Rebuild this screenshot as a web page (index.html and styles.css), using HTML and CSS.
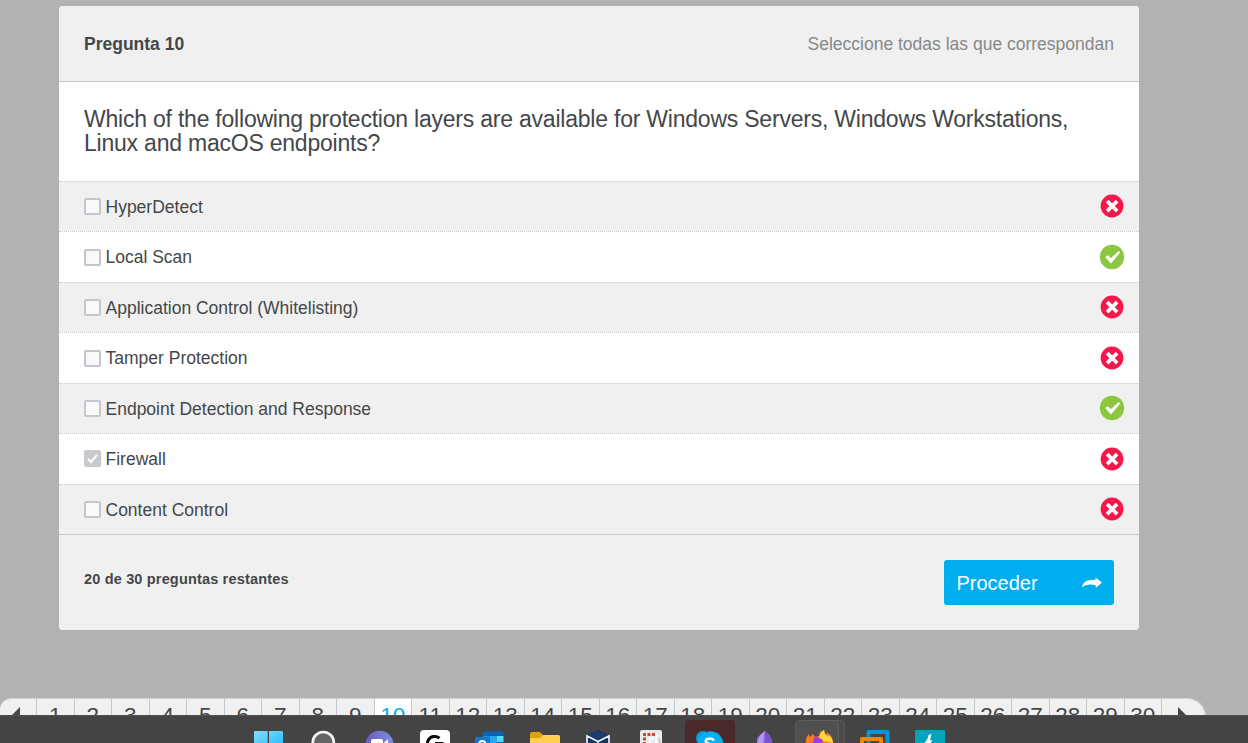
FILE: index.html
```html
<!DOCTYPE html>
<html lang="es">
<head>
<meta charset="utf-8">
<title>Pregunta 10</title>
<link rel="stylesheet" href="styles.css">
</head>
<body>
<svg class="defs" width="0" height="0">
  <defs>
    <symbol id="wrong" viewBox="0 0 26 26"><circle cx="13" cy="13" r="11.4" fill="#f5174a"/><path d="M9.4 9.4l7.400 7.400M16.800 9.400l-7.400 7.400" stroke="#fff" stroke-width="3.700" stroke-linecap="square" stroke-linejoin="round"/></symbol>
    <symbol id="right" viewBox="0 0 26 26"><circle cx="13" cy="13" r="12.200" fill="#8dc63f"/><path d="M6.200 12.900l2.800-1.700 2.800 3.100 7.900-7.400 1.500 1.700-9.200 10.800z" fill="#fff"/></symbol>
  </defs>
</svg>
<main class="page">
  <section class="card">
    <header class="card-head"><h1 class="number">Pregunta 10</h1><span class="hint">Seleccione todas las que correspondan</span></header>
    <h2 class="question">Which of the following protection layers are available for Windows Servers, Windows Workstations, Linux and macOS endpoints?</h2>
    <ul class="answers">
      <li class="answer"><i class="box"></i><span class="label">HyperDetect</span><svg class="mark"><use href="#wrong"/></svg></li>
      <li class="answer"><i class="box"></i><span class="label">Local Scan</span><svg class="mark"><use href="#right"/></svg></li>
      <li class="answer"><i class="box"></i><span class="label">Application Control (Whitelisting)</span><svg class="mark"><use href="#wrong"/></svg></li>
      <li class="answer"><i class="box"></i><span class="label">Tamper Protection</span><svg class="mark"><use href="#wrong"/></svg></li>
      <li class="answer"><i class="box"></i><span class="label">Endpoint Detection and Response</span><svg class="mark"><use href="#right"/></svg></li>
      <li class="answer"><i class="box checked"><svg width="17" height="17" viewBox="0 0 17 17"><path d="M4 9l3 3 6-7.2" fill="none" stroke="#fff" stroke-width="2"/></svg></i><span class="label">Firewall</span><svg class="mark"><use href="#wrong"/></svg></li>
      <li class="answer"><i class="box"></i><span class="label">Content Control</span><svg class="mark"><use href="#wrong"/></svg></li>
    </ul>
    <footer class="card-foot">
      <span class="remaining">20 de 30 preguntas restantes</span>
      <button class="proceed"><span class="proceed-text">Proceder</span><svg width="20" height="12" viewBox="0 0 20 12"><path d="M0 10.500C.5 5 5 2.300 13.500 2.700V.5L20 5.500l-6 5.200-.5-2.400C8.500 7 4 7.300 0 10.500z" fill="#fff"/></svg></button>
    </footer>
  </section>
  <nav class="pager">
    <span class="prev"><svg class="arrow" width="9" height="18" viewBox="0 0 9 18"><path d="M9 0v18L0 9z" fill="#444749"/></svg></span>
    <span class="num">1</span><span class="num">2</span><span class="num">3</span><span class="num">4</span><span class="num">5</span><span class="num">6</span><span class="num">7</span><span class="num">8</span><span class="num">9</span><span class="num current">10</span><span class="num">11</span><span class="num">12</span><span class="num">13</span><span class="num">14</span><span class="num">15</span><span class="num">16</span><span class="num">17</span><span class="num">18</span><span class="num">19</span><span class="num">20</span><span class="num">21</span><span class="num">22</span><span class="num">23</span><span class="num">24</span><span class="num">25</span><span class="num">26</span><span class="num">27</span><span class="num">28</span><span class="num">29</span><span class="num">30</span>
    <span class="next"><svg class="arrow" width="9" height="18" viewBox="0 0 9 18"><path d="M0 0v18l9-9z" fill="#444749"/></svg></span>
  </nav>
</main>
<div class="taskbar">
  <svg class="app" viewBox="241 715 55 28"><defs><linearGradient id="win" x1="0" y1="0" x2="1" y2="1"><stop offset="0" stop-color="#87dcff"/><stop offset="1" stop-color="#22bdfb"/></linearGradient></defs><path d="M255 731h12.700v15H254v-14a1 1 0 0 1 1-1zM269 731h13a1 1 0 0 1 1 1v14h-14z" fill="url(#win)"/></svg>
  <svg class="app" viewBox="296 715 55 28"><circle cx="323.300" cy="742.500" r="10.500" fill="#646464" stroke="#f3f3f3" stroke-width="2.700"/></svg>
  <svg class="app" viewBox="351 715 55 28"><defs><linearGradient id="chat"><stop offset="0" stop-color="#6b59bb"/><stop offset="1" stop-color="#7d8fe0"/></linearGradient></defs><circle cx="379.500" cy="745" r="14.200" fill="url(#chat)"/><rect x="371" y="739" width="12" height="12" rx="2" fill="#fff"/><path d="M384 742.500l4-3.300v8h-4z" fill="#fff"/></svg>
  <svg class="app" viewBox="406 715 55 28"><rect x="420" y="730" width="30" height="30" rx="4" fill="#fff"/><path d="M439.500 738.200A7.300 7.300 0 1 0 442 743.500h-7" fill="none" stroke="#0a0a0a" stroke-width="3"/></svg>
  <svg class="app" viewBox="461 715 55 28"><path d="M483 732.500a1 1 0 0 1 1-1h18.500a1 1 0 0 1 1 1V743H483z" fill="#0a64b5"/><path d="M483 736h14v7h-14z" fill="#168bdc"/><path d="M490 736h7v7h-7z" fill="#28a8ea"/><path d="M497 736h6.500v6H497z" fill="#50d9ff"/><rect x="475" y="737" width="15" height="15" rx="1.500" fill="#0f78d4"/><circle cx="482.300" cy="744" r="3" fill="none" stroke="#fff" stroke-width="2"/></svg>
  <svg class="app" viewBox="516 715 55 28"><path d="M530 734a2 2 0 0 1 2-2h8l3 3h15a2 2 0 0 1 2 2v6h-30z" fill="#dda20a"/><path d="M530 738h10l3-3h15a2 2 0 0 1 2 2v6h-30z" fill="#ffd050"/></svg>
  <svg class="app" viewBox="571 715 55 28"><path d="M586 735.500l12-5.500 12 5.500V750h-24z" fill="#18355f"/><path d="M598 741.500l-11-5.500v12M598 741.500l11-5.500v12M598 741v5" fill="none" stroke="#edf4fb" stroke-width="1.700"/><path d="M588.500 735l9.500-4.300 9.500 4.300-9.500 4.700z" fill="#1d3e70"/></svg>
  <svg class="app" viewBox="626 715 55 28"><rect x="640" y="730" width="22" height="22" rx="2" fill="#e8e9ea"/><path d="M643 733h3v3h-3zM647.500 733h3v3h-3zM652 733h3v3h-3zM643 737.500h3v3h-3zM643 742h3v2h-3z" fill="#d24726"/><path d="M650 745v-6.500h4M656.500 734v9" stroke="#f9f9f9" stroke-width="2.500" fill="none"/><path d="M658 738q2 2 2 5" stroke="#aaa" fill="none"/></svg>
  <svg class="app" viewBox="681 715 55 28"><rect x="685" y="720" width="50" height="40" rx="4" fill="#4b2829"/><circle cx="703" cy="738" r="7" fill="#0a9de5"/><circle cx="710.500" cy="744" r="12.800" fill="#09aeed"/><path d="M714 740.500q-1.500-2.200-4.500-2-4 .3-3.600 3 .5 2 4.600 2.800" fill="none" stroke="#fff" stroke-width="2.700"/></svg>
  <svg class="app" viewBox="736 715 55 28"><path d="M764.500 731l5 4 2.500 6v6h-15v-9z" fill="#9565e4"/><path d="M764.500 731l-5 5-2.500 8h6z" fill="#b29af4"/><path d="M765 731l5 5 2 8h-7z" fill="#7954cf"/></svg>
  <svg class="app" viewBox="791 715 55 28"><rect x="800" y="720.500" width="44.500" height="40" rx="4" fill="#4b4b4b" stroke="#606060" stroke-width=".7"/><rect x="795.500" y="720.500" width="43" height="40" rx="4" fill="#505050" stroke="#646464" stroke-width=".7"/><path d="M805.500 743q0-5 3-9l1.500 3 3-3 2 3 4-1 1-4 4-2 1 4 3-1q5 4 5 10z" fill="#ff7a27"/><path d="M819 740q0-7 5-10l1 4 3 3 1-2q4 4 4 8z" fill="#ffd83b"/><path d="M813 738q5-2 10 2l-1 3h-10l2-3z" fill="#9c3ce3"/></svg>
  <svg class="app" viewBox="846 715 55 28"><path d="M868.500 745v-13h19v13" fill="none" stroke="#0a95d5" stroke-width="4" stroke-linejoin="round"/><path d="M862 747v-8h19v8" fill="none" stroke="#f48500" stroke-width="4" stroke-linejoin="round"/></svg>
  <svg class="app" viewBox="901 715 55 28"><path d="M915 730h30v13h-30z" fill="#00a4bd"/><path d="M928.500 735l3-1-1.500 6h2l-1 3h-7q3.500-2 4.500-8z" fill="#fff"/></svg>
</div>
</body>
</html>
```

FILE: styles.css
```css
* { box-sizing: border-box; }
body {
  margin: 0;
  height: 743px;
  overflow: hidden;
  display: flex;
  flex-direction: column;
  background: #b2b2b2;
  color: #444749;
  font-family: "Liberation Sans", Arial, sans-serif;
}
.defs { display: block; flex: none; height: 0; }
.page { height: 715px; padding-top: 6px; overflow: hidden; flex: none; }
.card {
  width: 1080px;
  height: 624px;
  margin-left: 59px;
  background: #fff;
  border-radius: 4px;
  overflow: hidden;
}
.card-head {
  height: 76px;
  padding: 2px 25px 0;
  display: flex;
  align-items: center;
  justify-content: space-between;
  background: #f0f0f0;
  border-bottom: 1px solid #c7c8ca;
}
.number { margin: 0; font-size: 17.5px; font-weight: 700; }
.hint { font-size: 17.5px; color: #87888a; }
.question {
  margin: 0;
  height: 99px;
  padding: 25px 25px 0;
  font-size: 23px;
  line-height: 24px;
  letter-spacing: -0.22px;
  font-weight: 400;
}
.answers { list-style: none; margin: 0; padding: 0; }
.answer {
  height: 50.45px;
  padding: 0 13.7px 0 25px;
  display: flex;
  align-items: center;
  border-top: 1px dotted #cbcbcc;
  font-size: 17.5px;
}
.answer:nth-child(odd) { background: #f0f0f0; }
.label { padding-top: 1.6px; }
.box {
  width: 17px;
  height: 17px;
  margin-right: 4.5px;
  border: 2px solid #c5c5cd;
  border-radius: 2px;
  background: #f9f9fa;
}
.checked { border: 0; background: #c8c8cf; }
.checked svg { display: block; }
.mark { width: 26px; height: 26px; margin: 0 0 0.5px auto; }
.card-foot {
  height: 96px;
  padding: 25px 25px 0;
  display: flex;
  justify-content: space-between;
  align-items: flex-start;
  background: #f0f0f0;
  border-top: 1px solid #c7c8ca;
}
.remaining { padding-top: 10px; font-size: 14.5px; line-height: 18px; font-weight: 700; letter-spacing: 0.17px; }
.proceed {
  width: 170px;
  height: 45px;
  padding: 0 12px 0 12.5px;
  display: flex;
  align-items: center;
  justify-content: space-between;
  border: 0;
  border-radius: 3px;
  background: #00aeef;
  color: #fff;
  font: 20px "Liberation Sans", Arial, sans-serif;
}
.proceed-text { padding-top: 2px; }
.pager {
  width: 1206px;
  height: 38px;
  margin-top: 68px;
  display: flex;
  background: #f0f0f0;
  border-top: 1px solid #d1d3d4;
  border-right: 1px solid #d1d3d4;
  border-radius: 12px 20px 20px 12px;
  overflow: hidden;
  font-size: 22.5px;
  line-height: 33px;
}
.arrow { display: block; }
.prev { width: 36px; padding: 8px 0 0 11px; }
.num { width: 37.5px; border-left: 1px solid #c3c8cb; text-align: center; }
.current { background: #fff; color: #00aeef; }
.next { flex: 1; padding: 8px 0 0 16px; border-left: 1px solid #c3c8cb; }
.taskbar {
  height: 28px;
  flex: none;
  padding-left: 241px;
  display: flex;
  background: #444;
  border-top: 1px solid #505050;
}
.app { width: 55px; height: 28px; margin-top: -1px; flex: none; display: block; }
```
